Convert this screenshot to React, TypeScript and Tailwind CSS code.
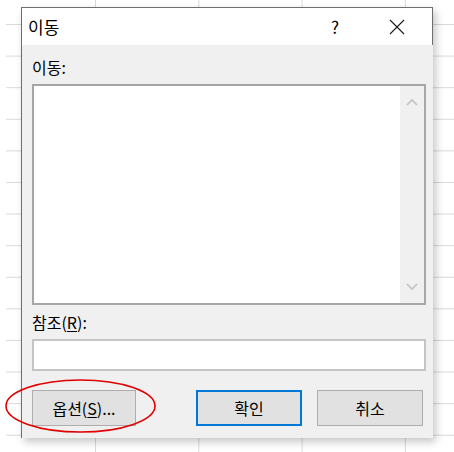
const FONT = "font-['Segoe_UI','Noto_Sans_CJK_KR',sans-serif]";

function CloseIcon() {
  return (
    <svg width="16" height="16" viewBox="0 0 16 16" fill="none" stroke="#1a1a1a" strokeWidth="1.1">
      <path d="M1 1L15 15M15 1L1 15" />
    </svg>
  );
}

function Chevron({ up }: { up?: boolean }) {
  return (
    <svg width="12" height="8" viewBox="0 0 12 8" fill="none" stroke="#c2c2c2" strokeWidth="1.6">
      <path d={up ? "M1 7L6 2L11 7" : "M1 1L6 6L11 1"} />
    </svg>
  );
}

function Button({ children, primary }: { children: React.ReactNode; primary?: boolean }) {
  return (
    <button
      className={
        primary
          ? "flex h-[36px] w-[106px] items-center justify-center border-2 border-[#0078d7] bg-[#e1e1e1] text-[16px] text-black"
          : "flex h-[36px] w-[106px] items-center justify-center border border-[#adadad] bg-[#e1e1e1] text-[16px] text-black"
      }
    >
      {children}
    </button>
  );
}

export default function App() {
  return (
    <div className={`relative h-[452px] w-[454px] overflow-hidden bg-white ${FONT}`}>
      {/* sheet grid behind the dialog */}
      <div className="absolute inset-y-0 left-[6px] right-0 bg-[linear-gradient(#d9d9d9_1px,transparent_1px),linear-gradient(90deg,#d9d9d9_1px,transparent_1px)] bg-[size:103.3px_31.6px] bg-[position:0_24px,89px_0]" />

      {/* dialog window */}
      <div className="absolute left-[21px] top-[7px] flex w-[412px] flex-col border-l border-t border-[#6e6e6e] bg-[#f0f0f0] shadow-[3px_4px_8px_rgba(0,0,0,0.22)]">
        <div className="flex h-[37px] items-center border-r border-[#6e6e6e] bg-white pl-[6px]">
          <span className="text-[17px] text-black">이동</span>
          <span className="ml-auto mr-[50px] text-[17px] text-black">?</span>
          <span className="mr-[27px] flex items-center">
            <CloseIcon />
          </span>
        </div>

        <div className="flex flex-col px-[10px] pb-[12px] pt-[12px]">
          <div className="h-[20px] text-[16px] leading-[20px] text-black">이동:</div>

          <div className="mt-[7px] flex h-[221px] w-[394px] border-2 border-[#a6a6a6] bg-white">
            <div className="flex-1" />
            <div className="flex w-[24px] flex-col items-center justify-between bg-[#f0f0f0] py-[12px]">
              <Chevron up />
              <Chevron />
            </div>
          </div>

          <div className="mt-[7px] h-[20px] text-[16px] leading-[20px] text-black">
            참조(<span className="underline underline-offset-2">R</span>):
          </div>

          <div className="mt-[7px] h-[32px] w-[394px] border-2 border-[#c4c4c4] bg-white" />

          <div className="mt-[19px] flex items-center">
            <Button>
              옵션(<span className="underline underline-offset-2">S</span>)...
            </Button>
            <div className="ml-[60px]">
              <Button primary>확인</Button>
            </div>
            <div className="ml-[15px]">
              <Button>취소</Button>
            </div>
          </div>
        </div>
      </div>

      {/* red annotation circle */}
      <svg className="absolute left-[4px] top-[378px]" width="153" height="56" viewBox="0 0 153 56" fill="none">
        <ellipse cx="76.5" cy="28" rx="74.5" ry="26" stroke="#e00000" strokeWidth="1.6" />
      </svg>
    </div>
  );
}
